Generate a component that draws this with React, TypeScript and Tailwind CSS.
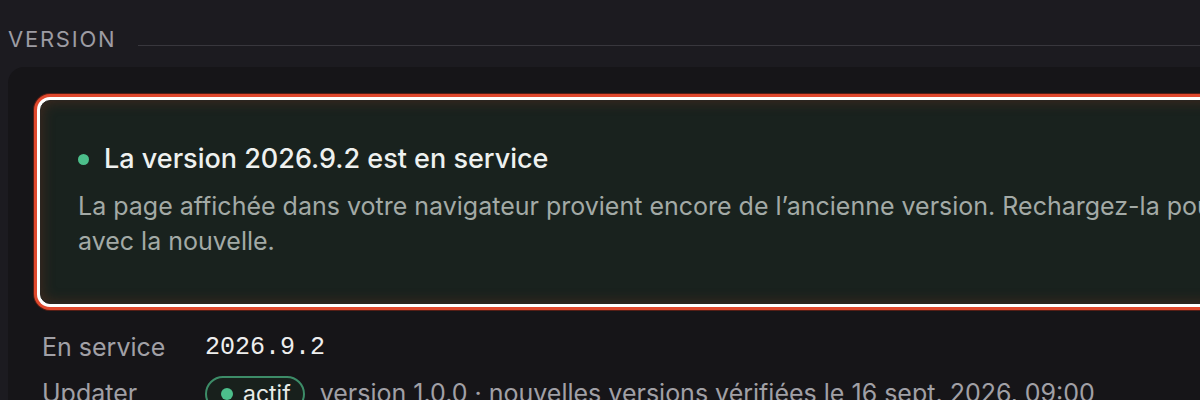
import React from "react";

export default function App() {
  return (
    <div
      className="w-[1200px] h-[400px] overflow-hidden bg-[#1c1b20]"
      style={{ fontFamily: "Inter, 'Noto Sans', sans-serif" }}
    >
      <div className="w-[1500px] pl-2">
        <div className="flex items-center gap-[22px] h-[78px]">
          <span className="text-[22px] tracking-[0.08em] text-[#9d9ca3] leading-none">
            VERSION
          </span>
          <div className="flex-1 h-px bg-[#38373d] mt-[12px]" />
        </div>
        <div className="rounded-[16px] bg-[#161518] -mt-[11px] px-[32px] pt-[33px] pb-8">
          <div className="rounded-[10px] bg-[#19221e] border border-[#2a2520] pl-[37px] pr-10 pt-[40px] pb-[44px] shadow-[0_0_0_3px_#ffffff,0_0_0_6px_#e0482d,0_0_0_7px_rgba(150,40,20,0.5),inset_0_0_14px_rgba(120,50,30,0.45)]">
            <div className="flex items-center gap-[15px] h-[36px]">
              <span className="w-[11px] h-[11px] rounded-full bg-[#4cbf8b] shrink-0" />
              <span className="text-[27px] font-medium text-[#eef1ef]">
                La version 2026.9.2 est en service
              </span>
            </div>
            <p className="mt-[12px] text-[25px] leading-[35px] text-[#a3aaa6] w-[1300px]">
              La page affichée dans votre navigateur provient encore de l’ancienne version. Rechargez-la pour travailler avec la nouvelle.
            </p>
          </div>
          <div className="mt-[26px] flex flex-col gap-[10px]">
            <div className="flex items-center h-[36px]">
              <span className="w-[165px] pl-[2px] text-[25px] text-[#a1a0a6]">En service</span>
              <span className="text-[25px] text-[#eeeeee]" style={{ fontFamily: "'Liberation Mono', monospace" }}>
                2026.9.2
              </span>
            </div>
            <div className="flex items-center h-[36px]">
              <span className="w-[165px] pl-[2px] text-[25px] text-[#a1a0a6]">Updater</span>
              <span className="flex items-center gap-[10px] h-[36px] pl-[14px] pr-[12px] rounded-full border-2 border-[#3d8c68] bg-[#18201c]">
                <span className="w-[12px] h-[12px] rounded-full bg-[#4cbf8b]" />
                <span className="text-[23px] text-[#e8ece9]">actif</span>
              </span>
              <span className="ml-[15px] text-[25px] text-[#a1a0a6]">
                version 1.0.0 · nouvelles versions vérifiées le 16 sept. 2026, 09:00
              </span>
            </div>
          </div>
        </div>
      </div>
    </div>
  );
}
